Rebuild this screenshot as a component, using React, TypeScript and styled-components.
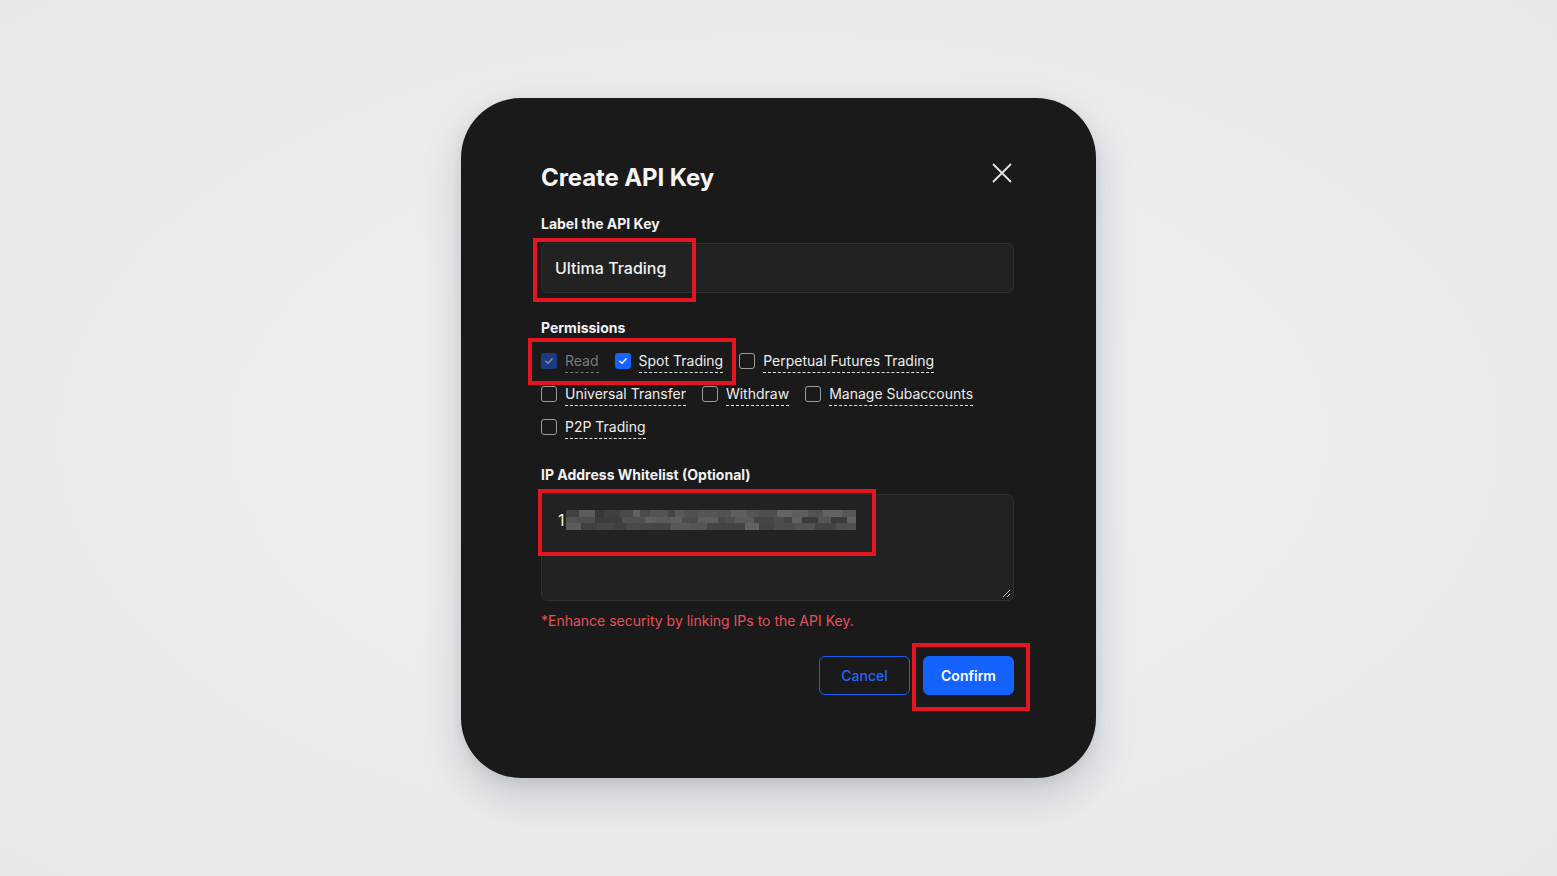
import React from "react";
import styled, { createGlobalStyle } from "styled-components";

const GlobalStyle = createGlobalStyle`
  html, body {
    margin: 0;
    padding: 0;
  }
  body {
    background: radial-gradient(ellipse at center, #eef0f2 0%, #e6e8eb 100%);
    font-family: Inter, "Noto Sans", "Liberation Sans", sans-serif;
    -webkit-font-smoothing: antialiased;
  }
`;

const Page = styled.div`
  width: 100vw;
  height: 100vh;
  display: flex;
  align-items: center;
  justify-content: center;
`;

const Dialog = styled.div`
  position: relative;
  box-sizing: border-box;
  width: 635px;
  height: 680px;
  padding: 64px 82px 0 80px;
  background: #1a1a1a;
  border-radius: 60px;
  box-shadow: 0 18px 40px rgba(40, 50, 60, 0.18), 0 4px 12px rgba(40, 50, 60, 0.08);
  display: flex;
  flex-direction: column;
`;

const Header = styled.div`
  display: flex;
  align-items: center;
  justify-content: space-between;
  height: 32px;
`;

const Title = styled.h1`
  margin: 0;
  font-size: 24px;
  line-height: 32px;
  font-weight: 700;
  color: #f5f5f5;
  letter-spacing: -0.1px;
`;

const CloseButton = styled.button`
  border: 0;
  background: none;
  padding: 0;
  margin-right: -3px;
  margin-top: -10px;
  width: 30px;
  height: 30px;
  display: flex;
  align-items: center;
  justify-content: center;
  cursor: pointer;
`;

const FieldLabel = styled.div<{ $top: number }>`
  margin-top: ${(p) => p.$top}px;
  font-size: 14px;
  line-height: 20px;
  font-weight: 700;
  color: #f2f2f2;
`;

const Input = styled.div`
  box-sizing: border-box;
  margin-top: 9px;
  height: 50px;
  padding: 0 13px;
  display: flex;
  align-items: center;
  background: #222222;
  border: 1px solid #2f2f2f;
  border-radius: 6px;
  font-size: 16px;
  font-weight: 500;
  color: #f0f0f0;
`;

const Permissions = styled.div`
  margin-top: 13px;
  display: flex;
  flex-wrap: wrap;
  column-gap: 16px;
  row-gap: 11px;
  width: 440px;
`;

const Option = styled.label<{ $disabled?: boolean }>`
  display: flex;
  align-items: flex-start;
  gap: 8px;
  cursor: ${(p) => (p.$disabled ? "default" : "pointer")};
`;

const Box = styled.span<{ $checked?: boolean; $disabled?: boolean }>`
  box-sizing: border-box;
  margin-top: 2px;
  width: 16px;
  height: 16px;
  border-radius: 3px;
  display: flex;
  align-items: center;
  justify-content: center;
  border: ${(p) => (p.$checked ? "none" : "1.5px solid #9c9c9c")};
  background: ${(p) =>
    p.$checked ? (p.$disabled ? "#1e3a80" : "#1463ff") : "transparent"};
`;

const OptionText = styled.span<{ $disabled?: boolean }>`
  font-size: 14px;
  line-height: 20px;
  padding-bottom: 1px;
  color: ${(p) => (p.$disabled ? "#7a7a7a" : "#ededed")};
  border-bottom: 1px dashed ${(p) => (p.$disabled ? "#777" : "#e0e0e0")};
`;

const TextArea = styled.div`
  position: relative;
  box-sizing: border-box;
  margin-top: 9px;
  height: 107px;
  padding: 15px 16px;
  background: #222222;
  border: 1px solid #2f2f2f;
  border-radius: 6px;
  font-size: 16px;
  line-height: 20px;
  color: #f0f0f0;
  display: flex;
  align-items: flex-start;
`;

const Grip = styled.svg`
  position: absolute;
  right: 2px;
  bottom: 2px;
`;

const Helper = styled.div`
  margin-top: 10px;
  font-size: 14px;
  line-height: 20px;
  color: #e6505c;
`;

const Actions = styled.div`
  margin-top: 25px;
  display: flex;
  justify-content: flex-end;
  gap: 13px;
`;

const Button = styled.button<{ $primary?: boolean }>`
  box-sizing: border-box;
  width: 91px;
  height: 39px;
  border-radius: 6px;
  font-family: inherit;
  font-size: 14px;
  font-weight: ${(p) => (p.$primary ? 600 : 500)};
  cursor: pointer;
  border: 1px solid ${(p) => (p.$primary ? "#1463ff" : "#1c5fef")};
  background: ${(p) => (p.$primary ? "#1463ff" : "transparent")};
  color: ${(p) => (p.$primary ? "#ffffff" : "#2566f8")};
`;

const Highlight = styled.div<{ $x: number; $y: number; $w: number; $h: number }>`
  position: absolute;
  box-sizing: border-box;
  left: ${(p) => p.$x}px;
  top: ${(p) => p.$y}px;
  width: ${(p) => p.$w}px;
  height: ${(p) => p.$h}px;
  border: 4px solid #e4151f;
  pointer-events: none;
`;

const Check = ({ dim }: { dim?: boolean }) => (
  <svg width="10" height="10" viewBox="0 0 10 10" fill="none">
    <path
      d="M1.8 5.2 L4 7.2 L8.2 2.8"
      stroke={dim ? "#8a96b0" : "#ffffff"}
      strokeWidth="1.3"
      strokeLinecap="round"
      strokeLinejoin="round"
    />
  </svg>
);

type Perm = { label: string; checked?: boolean; disabled?: boolean };

const permissions: Perm[] = [
  { label: "Read", checked: true, disabled: true },
  { label: "Spot Trading", checked: true },
  { label: "Perpetual Futures Trading" },
  { label: "Universal Transfer" },
  { label: "Withdraw" },
  { label: "Manage Subaccounts" },
  { label: "P2P Trading" },
];

// pixelated (redacted) IP text
const rand = (i: number) => Math.abs(Math.sin(i * 12.9898) * 43758.5453) % 1;
const shade = (i: number) => {
  const g = Math.round(56 + rand(i) * 44);
  return `rgb(${g},${g},${g})`;
};

const cells = (() => {
  const out: { x: number; y: number; w: number; h: number; fill: string }[] = [];
  [0, 7, 13].forEach((y, r) => {
    let x = 0;
    let i = 0;
    while (x < 290) {
      const w = 7 + Math.round(rand(r * 300 + i + 5) * 14);
      out.push({ x, y, w: Math.min(w, 290 - x), h: r === 1 ? 6 : 7, fill: shade(r * 500 + i + 11) });
      x += w;
      i++;
    }
  });
  return out;
})();

const Mosaic = () => (
  <svg width="290" height="20" viewBox="0 0 290 20" style={{ marginLeft: 1 }}>
    {cells.map((c, k) => (
      <rect key={k} x={c.x} y={c.y} width={c.w + 0.3} height={c.h} fill={c.fill} />
    ))}
  </svg>
);

export default function App() {
  return (
    <>
      <GlobalStyle />
      <Page>
        <Dialog>
          <Header>
            <Title>Create API Key</Title>
            <CloseButton aria-label="Close">
              <svg width="20" height="20" viewBox="0 0 20 20" fill="none">
                <path
                  d="M1.5 1.5 L18.5 18.5 M18.5 1.5 L1.5 18.5"
                  stroke="#e6e6e6"
                  strokeWidth="1.8"
                  strokeLinecap="round"
                />
              </svg>
            </CloseButton>
          </Header>

          <FieldLabel $top={20}>Label the API Key</FieldLabel>
          <Input>Ultima Trading</Input>

          <FieldLabel $top={25}>Permissions</FieldLabel>
          <Permissions>
            {permissions.map((p) => (
              <Option key={p.label} $disabled={p.disabled}>
                <Box $checked={p.checked} $disabled={p.disabled}>
                  {p.checked && <Check dim={p.disabled} />}
                </Box>
                <OptionText $disabled={p.disabled}>{p.label}</OptionText>
              </Option>
            ))}
          </Permissions>

          <FieldLabel $top={26}>IP Address Whitelist (Optional)</FieldLabel>
          <TextArea>
            <span>1</span>
            <Mosaic />
            <Grip width="10" height="10" viewBox="0 0 10 10">
              <path d="M9 2 L2 9 M9 6 L6 9" stroke="#bdbdbd" strokeWidth="1" />
            </Grip>
          </TextArea>
          <Helper>*Enhance security by linking IPs to the API Key.</Helper>

          <Actions>
            <Button>Cancel</Button>
            <Button $primary>Confirm</Button>
          </Actions>

          <Highlight $x={72} $y={140} $w={163} $h={64} />
          <Highlight $x={67} $y={240} $w={208} $h={47} />
          <Highlight $x={77} $y={391} $w={338} $h={67} />
          <Highlight $x={451} $y={545} $w={118} $h={68} />
        </Dialog>
      </Page>
    </>
  );
}
